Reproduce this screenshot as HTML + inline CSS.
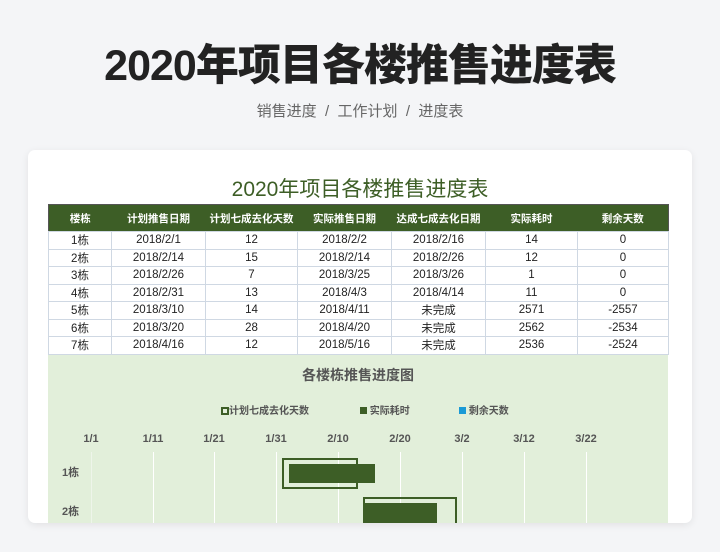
<!DOCTYPE html>
<html><head><meta charset="utf-8"><style>
*{margin:0;padding:0;box-sizing:border-box}
body{width:720px;height:552px;background:#f4f5f7;font-family:"Liberation Sans","Noto Sans CJK SC",sans-serif;position:relative;overflow:hidden}
.h1{position:absolute;top:31px;left:0;width:720px;text-align:center;font-size:43px;font-weight:900;color:#222;letter-spacing:-1px}
.sub{position:absolute;top:100px;left:0;width:720px;text-align:center;font-size:15px;color:#666}
.card{position:absolute;left:28px;top:150px;width:664px;height:373px;background:#fff;border-radius:7px;box-shadow:0 2px 8px rgba(0,0,0,.08);overflow:hidden}
.t2{position:absolute;left:0;top:23px;width:664px;text-align:center;font-size:21px;color:#3d5e26}
table{position:absolute;left:20px;top:54px;width:621px;border-collapse:collapse;font-size:11.5px;color:#222}
th{background:#3d5e26;color:#fff;height:27px;font-weight:bold;font-size:10.5px}
td{height:17.5px;text-align:center;border:1px solid #cfd8e3;padding:0}
table{border:1px solid #555}
.chart{position:absolute;left:20px;top:205px;width:620px;height:170px;background:#e2efda}
.ct{position:absolute;top:10px;width:620px;text-align:center;font-size:14px;font-weight:bold;color:#555}
.lg{position:absolute;top:47px;font-size:10px;font-weight:bold;color:#555}
.ax{position:absolute;top:78px;font-size:11px;font-weight:bold;color:#555;transform:translateX(-50%)}
.gl{position:absolute;top:97px;width:1px;height:80px;background:#fff}
</style></head><body>
<div class="h1">2020年项目各楼推售进度表</div>
<div class="sub">销售进度 &nbsp;/&nbsp; 工作计划 &nbsp;/&nbsp; 进度表</div>
<div class="card">
<div class="t2">2020年项目各楼推售进度表</div>
<table>
<colgroup><col style="width:63px"><col style="width:94px"><col style="width:92px"><col style="width:94px"><col style="width:94px"><col style="width:92px"><col></colgroup>
<tr><th>楼栋</th><th>计划推售日期</th><th>计划七成去化天数</th><th>实际推售日期</th><th>达成七成去化日期</th><th>实际耗时</th><th>剩余天数</th></tr>
<tr><td>1栋</td><td>2018/2/1</td><td>12</td><td>2018/2/2</td><td>2018/2/16</td><td>14</td><td>0</td></tr>
<tr><td>2栋</td><td>2018/2/14</td><td>15</td><td>2018/2/14</td><td>2018/2/26</td><td>12</td><td>0</td></tr>
<tr><td>3栋</td><td>2018/2/26</td><td>7</td><td>2018/3/25</td><td>2018/3/26</td><td>1</td><td>0</td></tr>
<tr><td>4栋</td><td>2018/2/31</td><td>13</td><td>2018/4/3</td><td>2018/4/14</td><td>11</td><td>0</td></tr>
<tr><td>5栋</td><td>2018/3/10</td><td>14</td><td>2018/4/11</td><td>未完成</td><td>2571</td><td>-2557</td></tr>
<tr><td>6栋</td><td>2018/3/20</td><td>28</td><td>2018/4/20</td><td>未完成</td><td>2562</td><td>-2534</td></tr>
<tr><td>7栋</td><td>2018/4/16</td><td>12</td><td>2018/5/16</td><td>未完成</td><td>2536</td><td>-2524</td></tr>
</table>
<div class="chart">
<div class="ct">各楼栋推售进度图</div>
<div class="lg" style="left:173px"><span style="display:inline-block;width:8px;height:8px;border:2px solid #3d5e26;vertical-align:-1px"></span>计划七成去化天数</div>
<div class="lg" style="left:312px"><span style="display:inline-block;width:7px;height:7px;background:#3d5e26"></span> 实际耗时</div>
<div class="lg" style="left:411px"><span style="display:inline-block;width:7px;height:7px;background:#1a9ad6"></span> 剩余天数</div>
<div class="ax" style="left:43px">1/1</div><div class="ax" style="left:105px">1/11</div><div class="ax" style="left:166px">1/21</div><div class="ax" style="left:228px">1/31</div><div class="ax" style="left:290px">2/10</div><div class="ax" style="left:352px">2/20</div><div class="ax" style="left:414px">3/2</div><div class="ax" style="left:476px">3/12</div><div class="ax" style="left:538px">3/22</div>
<div class="gl" style="left:43px;background:#eef5ea"></div><div class="gl" style="left:105px"></div><div class="gl" style="left:166px"></div><div class="gl" style="left:228px"></div><div class="gl" style="left:290px"></div><div class="gl" style="left:352px"></div><div class="gl" style="left:414px"></div><div class="gl" style="left:476px"></div><div class="gl" style="left:538px"></div>
<div style="position:absolute;left:14px;top:109px;font-size:11px;font-weight:bold;color:#555">1栋</div>
<div style="position:absolute;left:14px;top:148px;font-size:11px;font-weight:bold;color:#555">2栋</div>
<div style="position:absolute;left:234px;top:103px;width:76px;height:31px;border:2px solid #3d5e26"></div>
<div style="position:absolute;left:241px;top:109px;width:86px;height:19px;background:#3d5e26"></div>
<div style="position:absolute;left:315px;top:142px;width:94px;height:40px;border:2px solid #3d5e26"></div>
<div style="position:absolute;left:315px;top:148px;width:74px;height:30px;background:#3d5e26"></div>
</div>
</div>
</body></html>
